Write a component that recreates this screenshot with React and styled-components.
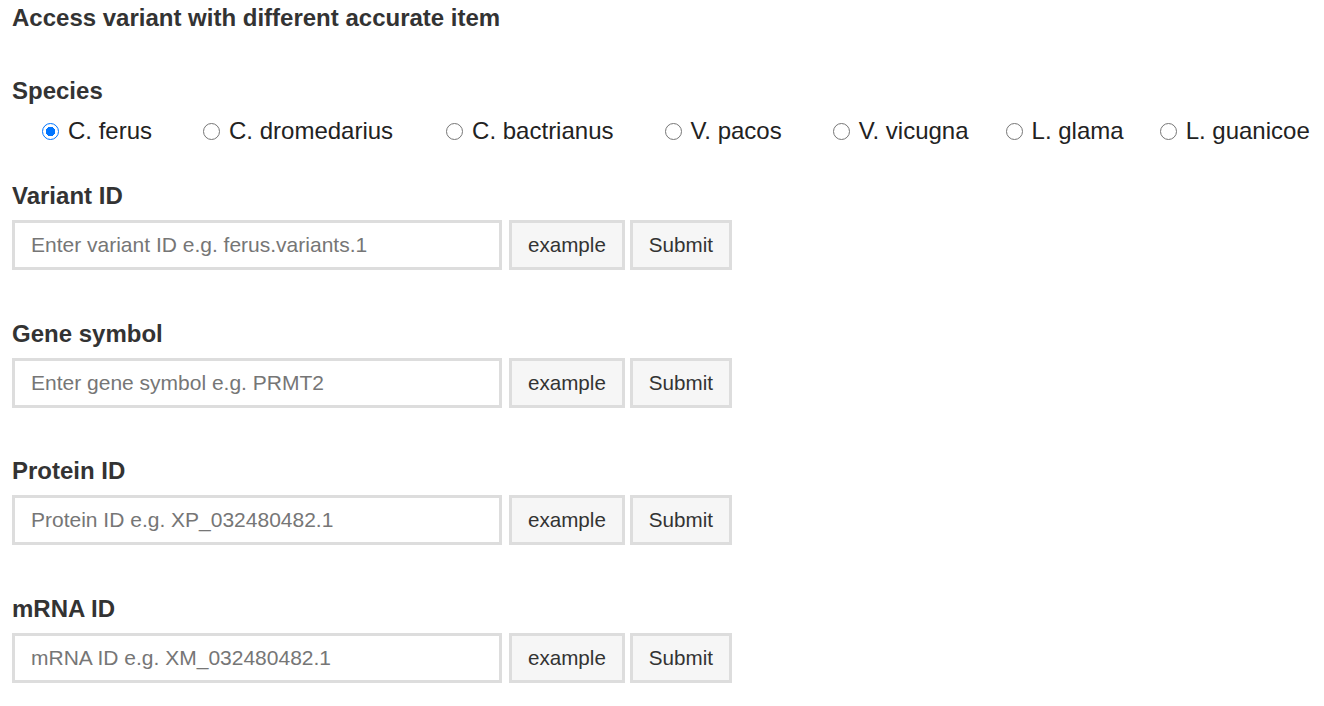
import React from 'react'
import styled, { createGlobalStyle } from 'styled-components'

const GlobalStyle = createGlobalStyle`
  body {
    margin: 0;
    background: #ffffff;
    font-family: 'Liberation Sans', Arial, sans-serif;
    color: #333333;
  }
`

const Page = styled.div`
  padding: 4px 12px 0 12px;
`

const Title = styled.h1`
  font-size: 24px;
  line-height: 28px;
  font-weight: bold;
  color: #333333;
  margin: 0 0 45px 0;
`

const Label = styled.h3`
  font-size: 24px;
  line-height: 28px;
  font-weight: bold;
  color: #333333;
  margin: 0;
`

const RadioRow = styled.div`
  display: flex;
  align-items: center;
  padding-left: 30px;
  margin: 12px 0 37px 0;
  height: 28px;
`

const RadioItem = styled.label`
  display: flex;
  align-items: center;
  font-size: 24px;
  line-height: 28px;
  color: #222222;
  margin-right: ${props => props.$space}px;
  cursor: pointer;
  white-space: nowrap;
`

const Radio = styled.input`
  appearance: none;
  box-sizing: border-box;
  width: 17px;
  height: 17px;
  margin: 0 9px 0 0;
  border: 1.5px solid #767676;
  border-radius: 50%;
  background: #ffffff;
  flex: none;

  &:checked {
    border: 1.5px solid #0075ff;
    background: radial-gradient(circle, #0075ff 0 4.5px, #ffffff 5px);
  }
`

const Section = styled.div`
  margin-bottom: ${props => props.$bottom}px;
`

const Row = styled.div`
  display: flex;
  align-items: stretch;
  margin-top: 10px;
  height: 50px;
`

const Input = styled.input`
  box-sizing: border-box;
  width: 490px;
  height: 50px;
  border: 3px solid #dddddd;
  padding: 0 16px;
  margin-right: 7px;
  font-family: 'Liberation Sans', Arial, sans-serif;
  font-size: 21px;
  color: #333333;
  outline: none;
  background: #ffffff;

  &::placeholder {
    color: #767676;
  }
`

const Button = styled.button`
  box-sizing: border-box;
  height: 50px;
  border: 3px solid #dddddd;
  background: #f6f6f6;
  padding: 0 16px;
  margin-right: 5px;
  font-family: 'Liberation Sans', Arial, sans-serif;
  font-size: 20.6px;
  color: #333333;
  cursor: pointer;
`

const species = [
  { name: 'C. ferus', space: 51 },
  { name: 'C. dromedarius', space: 53 },
  { name: 'C. bactrianus', space: 51 },
  { name: 'V. pacos', space: 51 },
  { name: 'V. vicugna', space: 37 },
  { name: 'L. glama', space: 36 },
  { name: 'L. guanicoe', space: 0 }
]

const fields = [
  { label: 'Variant ID', placeholder: 'Enter variant ID e.g. ferus.variants.1', bottom: 50 },
  { label: 'Gene symbol', placeholder: 'Enter gene symbol e.g. PRMT2', bottom: 49 },
  { label: 'Protein ID', placeholder: 'Protein ID e.g. XP_032480482.1', bottom: 50 },
  { label: 'mRNA ID', placeholder: 'mRNA ID e.g. XM_032480482.1', bottom: 20 }
]

const App = () => {
  const [selected, setSelected] = React.useState('C. ferus')

  return (
    <Page>
      <GlobalStyle />
      <Title>Access variant with different accurate item</Title>
      <Label>Species</Label>
      <RadioRow>
        {species.map(s => (
          <RadioItem key={s.name} $space={s.space}>
            <Radio
              type="radio"
              name="species"
              checked={selected === s.name}
              onChange={() => setSelected(s.name)}
            />
            {s.name}
          </RadioItem>
        ))}
      </RadioRow>
      {fields.map(f => (
        <Section key={f.label} $bottom={f.bottom}>
          <Label>{f.label}</Label>
          <Row>
            <Input placeholder={f.placeholder} />
            <Button>example</Button>
            <Button>Submit</Button>
          </Row>
        </Section>
      ))}
    </Page>
  )
}

export default App
